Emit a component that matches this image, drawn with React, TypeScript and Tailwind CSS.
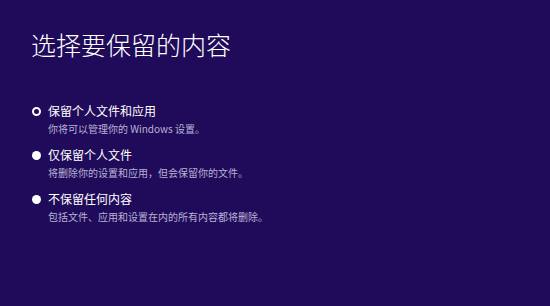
export default function App() {
  const options = [
    { title: "保留个人文件和应用", desc: "你将可以管理你的 Windows 设置。", selected: true },
    { title: "仅保留个人文件", desc: "将删除你的设置和应用，但会保留你的文件。", selected: false },
    { title: "不保留任何内容", desc: "包括文件、应用和设置在内的所有内容都将删除。", selected: false },
  ];

  return (
    <div
      className="h-[306px] w-[550px] overflow-hidden bg-[#1f0b5a] text-white"
      style={{ fontFamily: '"Noto Sans CJK SC", "Noto Sans", sans-serif' }}
    >
      <h1 className="pl-[31px] pt-[27px] text-[25px] leading-[34px] font-light">
        选择要保留的内容
      </h1>
      <div className="mt-[42px] flex flex-col gap-[11px] pl-[32px]">
        {options.map((o) => (
          <div key={o.title} className="flex flex-col">
            <div className="flex items-center gap-[7px]">
              {o.selected ? (
                <span className="h-[9px] w-[9px] rounded-full border-[2px] border-white bg-[#1f0b5a]" />
              ) : (
                <span className="h-[9px] w-[9px] rounded-full bg-white" />
              )}
              <span className="text-[12px] leading-[16px]">{o.title}</span>
            </div>
            <p className="mt-[3px] pl-[16px] text-[10px] leading-[14px] text-[#b9b2d6]">{o.desc}</p>
          </div>
        ))}
      </div>
    </div>
  );
}
